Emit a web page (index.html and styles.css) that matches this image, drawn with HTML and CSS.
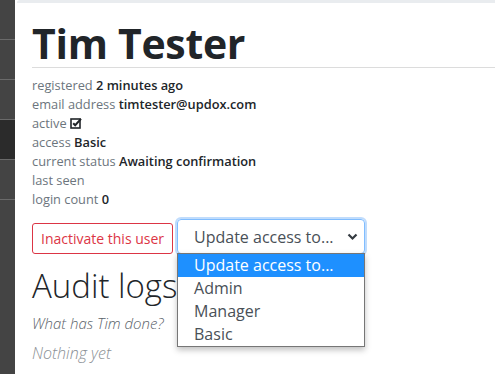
FILE: index.html
```html
<!DOCTYPE html>
<html lang="en">

<head>
    <meta charset="UTF-8" />
    <meta name="viewport" content="width=device-width, initial-scale=1.0" />
    <title>Tim Tester</title>
    <link rel="stylesheet" href="styles.css">
</head>

<body>
    <nav class="sidebar">
        <div class="nav-item"></div>
        <div class="nav-item"></div>
        <div class="nav-item"></div>
        <div class="nav-item active"></div>
        <div class="nav-item"></div>
    </nav>
    <div class="page">
        <div class="topbar"></div>
        <main class="content">
            <header class="user-header">
                <h1>Tim Tester</h1>
            </header>
            <ul class="details">
                <li><span class="label">registered</span> <strong>2 minutes ago</strong></li>
                <li><span class="label">email address</span> <strong>timtester@updox.com</strong></li>
                <li><span class="label">active</span>
                    <svg class="check" width="12" height="12" viewBox="0 0 12 12">
                        <rect x="1" y="2" width="9" height="9" fill="none" stroke="#212529" stroke-width="1.6" />
                        <path d="M3.2 6.2 L5.2 8.2 L11 1.8" fill="none" stroke="#212529" stroke-width="2" />
                    </svg>
                </li>
                <li><span class="label">access</span> <strong>Basic</strong></li>
                <li><span class="label">current status</span> <strong>Awaiting confirmation</strong></li>
                <li><span class="label">last seen</span></li>
                <li><span class="label">login count</span> <strong>0</strong></li>
            </ul>
            <div class="actions">
                <button class="btn-danger">Inactivate this user</button>
                <div class="select-wrap">
                    <div class="select">
                        <span>Update access to...</span>
                        <svg class="chevron" width="11" height="8" viewBox="0 0 11 8">
                            <path d="M1.5 1.5 L5.5 5.5 L9.5 1.5" fill="none" stroke="#343a40" stroke-width="2.2" />
                        </svg>
                    </div>
                    <ul class="options">
                        <li class="selected">Update access to...</li>
                        <li>Admin</li>
                        <li>Manager</li>
                        <li>Basic</li>
                    </ul>
                </div>
            </div>
            <section class="audit">
                <h2>Audit logs</h2>
                <p class="question">What has Tim done?</p>
                <p class="empty">Nothing yet</p>
            </section>
        </main>
    </div>
</body>

</html>
```

FILE: styles.css
```css
* {
    margin: 0;
    padding: 0;
    box-sizing: border-box;
}

body {
    display: flex;
    min-height: 374px;
    font-family: 'Open Sans', sans-serif;
    color: #212529;
    background: #fff;
    overflow: hidden;
}

.sidebar {
    width: 15px;
    flex-shrink: 0;
    background: #444;
}

.nav-item {
    height: 40px;
    border-bottom: 1px solid #6a6a6a;
}

.nav-item.active {
    background: #2b2b2b;
}

.page {
    flex: 1;
    margin-left: 2px;
}

.topbar {
    height: 3px;
    background: #e9ecef;
    border-top-left-radius: 3px;
}

.content {
    padding-left: 15px;
}

.user-header {
    padding-top: 16px;
    border-bottom: 1px solid #dcdcdc;
}

.user-header h1 {
    font-size: 41px;
    font-weight: 700;
    line-height: 48px;
    letter-spacing: -0.3px;
}

.details {
    list-style: none;
    margin-top: 8px;
    font-size: 12.8px;
    line-height: 19px;
}

.details .label {
    color: #6c757d;
}

.details strong {
    font-weight: 600;
}

.check {
    vertical-align: -1px;
}

.actions {
    display: flex;
    align-items: flex-end;
    gap: 4px;
    margin-top: 10px;
}

.btn-danger {
    font-family: 'Open Sans', sans-serif;
    font-size: 14px;
    color: #dc3545;
    background: #fff;
    border: 1px solid #dc3545;
    border-radius: 3px;
    height: 31px;
    padding: 0 8px;
}

.select-wrap {
    position: relative;
    width: 188px;
}

.select {
    display: flex;
    align-items: center;
    justify-content: space-between;
    height: 35px;
    padding: 0 6px 0 16px;
    border: 1px solid #80bdff;
    border-radius: 4px;
    box-shadow: 0 0 0 2px #c0dcfc;
    font-size: 16px;
    color: #495057;
}

.options {
    position: absolute;
    top: 34px;
    left: 0;
    width: 188px;
    list-style: none;
    background: #fff;
    border: 1px solid #767676;
    box-shadow: 0 3px 6px rgba(0, 0, 0, 0.25);
    font-size: 16px;
    line-height: 23px;
    color: #495057;
}

.options li {
    padding-left: 16px;
}

.options li.selected {
    background: #1e90ff;
    color: #fff;
}

.audit h2 {
    font-size: 33px;
    font-weight: 300;
    line-height: 40px;
    margin-top: 12px;
}

.audit .question {
    font-size: 15px;
    font-style: italic;
    font-weight: 300;
    color: #5a6269;
    line-height: 22px;
    margin-top: 6px;
}

.audit .empty {
    font-size: 16px;
    font-style: italic;
    font-weight: 300;
    color: #8a8f94;
    margin-top: 8px;
    line-height: 22px;
}
```
